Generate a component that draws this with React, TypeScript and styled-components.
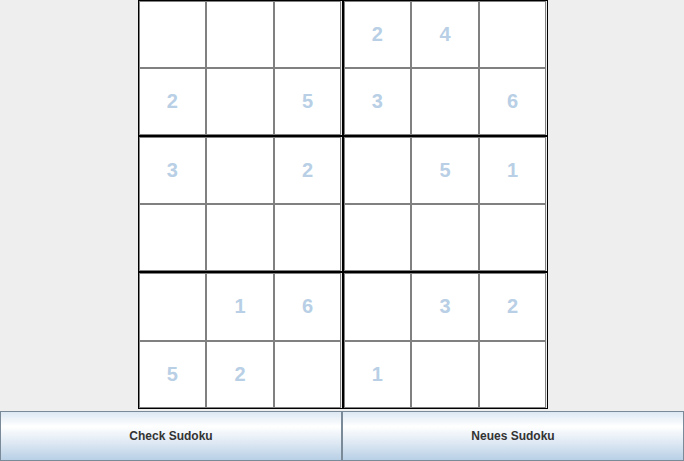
import React from "react";
import styled, { createGlobalStyle } from "styled-components";

const Global = createGlobalStyle`
  html, body { margin: 0; padding: 0; background: #eeeeee; }
  body { font-family: "Liberation Sans", Arial, sans-serif; }
`;

const Page = styled.div`
  width: 684px;
  height: 461px;
  display: flex;
  flex-direction: column;
  background: #eeeeee;
`;

const BoardArea = styled.div`
  height: 411px;
  display: flex;
  justify-content: center;
  padding-left: 1px;
  box-sizing: border-box;
`;

const Board = styled.div`
  width: 410px;
  height: 409px;
  display: grid;
  grid-template-columns: 205px 205px;
  grid-template-rows: 136px 136px 137px;
`;

const Box = styled.div`
  border: 1px solid #000;
  display: grid;
  grid-template-columns: repeat(3, 1fr);
  grid-template-rows: repeat(2, 1fr);
  min-width: 0;
  min-height: 0;
`;

const Cell = styled.div`
  border: 1px solid #808080;
  background: #ffffff;
  display: flex;
  align-items: center;
  justify-content: center;
  font-family: "Liberation Sans", Arial, sans-serif;
  font-weight: bold;
  font-size: 20px;
  color: #b8cfe5;
  min-width: 0;
  min-height: 0;
`;

const ButtonBar = styled.div`
  flex: 1;
  display: grid;
  grid-template-columns: 342px 342px;
`;

const Button = styled.button`
  margin: 0;
  border: 1px solid #7a8a99;
  background: linear-gradient(
    to bottom,
    #dde8f3 0%,
    #ffffff 30%,
    #dde8f3 65%,
    #b8cfe5 100%
  );
  font-family: "Liberation Sans", Arial, sans-serif;
  font-weight: bold;
  font-size: 12px;
  color: #333333;
  padding: 0;
  cursor: pointer;
`;

const grid: (number | null)[][] = [
  [null, null, null, 2, 4, null],
  [2, null, 5, 3, null, 6],
  [3, null, 2, null, 5, 1],
  [null, null, null, null, null, null],
  [null, 1, 6, null, 3, 2],
  [5, 2, null, 1, null, null],
];

export default function App() {
  const boxes: React.ReactNode[] = [];
  for (let br = 0; br < 3; br++) {
    for (let bc = 0; bc < 2; bc++) {
      const cells: React.ReactNode[] = [];
      for (let r = 0; r < 2; r++) {
        for (let c = 0; c < 3; c++) {
          const v = grid[br * 2 + r][bc * 3 + c];
          cells.push(<Cell key={`${r}-${c}`}>{v ?? ""}</Cell>);
        }
      }
      boxes.push(<Box key={`${br}-${bc}`}>{cells}</Box>);
    }
  }
  return (
    <>
      <Global />
      <Page>
        <BoardArea>
          <Board>{boxes}</Board>
        </BoardArea>
        <ButtonBar>
          <Button>Check Sudoku</Button>
          <Button>Neues Sudoku</Button>
        </ButtonBar>
      </Page>
    </>
  );
}
